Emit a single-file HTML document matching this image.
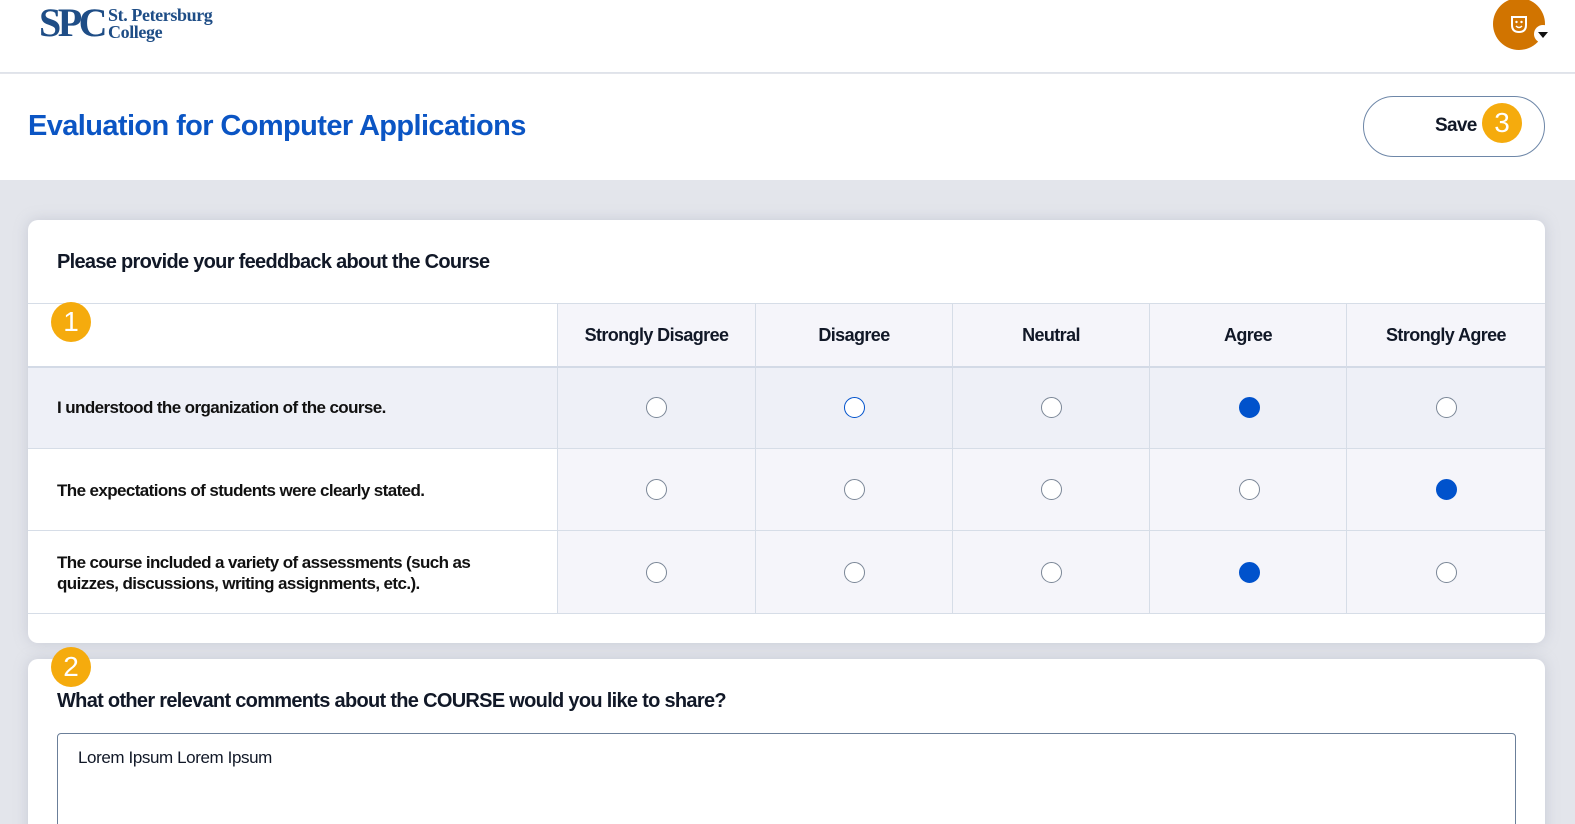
<!DOCTYPE html>
<html><head><meta charset="utf-8"><style>
*{margin:0;padding:0;box-sizing:border-box}
html,body{width:1575px;height:824px;overflow:hidden}
body{background:#e3e5eb;font-family:"Liberation Sans",sans-serif;color:#111827;position:relative}
.a{position:absolute}
.hdr{left:0;top:0;width:1575px;height:73px;background:#fff;border-bottom:1px solid #dfe3ea}
.band{left:0;top:74px;width:1575px;height:106px;background:#fff}
.card{background:#fff;border-radius:10px;box-shadow:0 0 14px rgba(150,155,175,.35)}
.badge{width:40px;height:40px;border-radius:50%;background:#f5ab0d;color:#fff;font-size:28px;text-align:center;line-height:40px}
.cell{position:absolute;border-right:1px solid #d6dde7;border-bottom:1px solid #d6dde7}
.hd{font-weight:bold;font-size:18px;letter-spacing:-0.6px;text-align:center;line-height:63px}
.lbl{font-weight:bold;font-size:17px;letter-spacing:-0.6px;color:#111}
.r{position:absolute;width:21px;height:21px;border-radius:50%;border:1.5px solid #7b8797;background:#fff}
.f{background:#0052cc;border-color:#0052cc}
</style></head><body>
<div class="a hdr"></div>
<div class="a" style="left:39px;top:2px;font-family:'Liberation Serif',serif;color:#1e4d86;font-weight:bold;font-size:40px;letter-spacing:-3.5px;line-height:42px">SPC</div>
<div class="a" style="left:108px;top:7px;font-family:'Liberation Serif',serif;color:#1e4d86;font-weight:bold;font-size:18px;line-height:17px;letter-spacing:-0.4px">St. Petersburg<br>College</div>
<div class="a" style="left:1493px;top:-2px;width:52px;height:52px;border-radius:50%;background:#d17400"></div>
<svg class="a" style="left:1509px;top:14px" width="20" height="20" viewBox="0 0 20 20"><path d="M3 3 L17 3 L17 11 Q17 18 10 18 Q3 18 3 11 Z" fill="none" stroke="#fff" stroke-width="2"/><circle cx="7.5" cy="8" r="1.2" fill="#fff"/><circle cx="12.5" cy="8" r="1.2" fill="#fff"/><path d="M7 12 Q10 15 13 12" stroke="#fff" stroke-width="1.5" fill="none"/></svg>
<div class="a" style="left:1534px;top:25px;width:18px;height:18px;border-radius:50%;background:#fff"></div>
<div class="a" style="left:1538px;top:32px;width:0;height:0;border-left:5px solid transparent;border-right:5px solid transparent;border-top:6px solid #111"></div>
<div class="a band"></div>
<div class="a" style="left:28px;top:110px;font-size:29px;font-weight:bold;color:#0b55c4;letter-spacing:-0.6px">Evaluation for Computer Applications</div>
<div class="a" style="left:1363px;top:96px;width:182px;height:61px;border:1px solid #6e87a8;border-radius:31px;background:#fff"></div>
<div class="a" style="left:1435px;top:115px;font-size:19px;font-weight:bold;letter-spacing:-0.7px">Save</div>
<div class="a badge" style="left:1482px;top:103px">3</div>

<div class="a card" style="left:28px;top:220px;width:1517px;height:423px"></div>
<div class="a" style="left:57px;top:251px;font-size:20px;font-weight:bold;letter-spacing:-0.7px">Please provide your feeddback about the Course</div>
<div class="a" style="left:28px;top:303px;width:1517px;height:1px;background:#d6dde7"></div>
<div class="cell" style="left:28px;top:304px;width:530px;height:64px;background:#fff;border-bottom:2px solid #d3dae6"></div>
<div class="a badge" style="left:51px;top:302px">1</div>
<div class="cell hd" style="left:557px;top:304px;width:199px;height:64px;background:#f5f5fa;border-left:1px solid #d6dde7;border-bottom:2px solid #d3dae6">Strongly Disagree</div>
<div class="cell hd" style="left:756px;top:304px;width:197px;height:64px;background:#f5f5fa;border-bottom:2px solid #d3dae6">Disagree</div>
<div class="cell hd" style="left:953px;top:304px;width:197px;height:64px;background:#f5f5fa;border-bottom:2px solid #d3dae6">Neutral</div>
<div class="cell hd" style="left:1150px;top:304px;width:197px;height:64px;background:#f5f5fa;border-bottom:2px solid #d3dae6">Agree</div>
<div class="cell hd" style="left:1347px;top:304px;width:198px;height:64px;background:#f5f5fa;border-right:none;border-bottom:2px solid #d3dae6">Strongly Agree</div>
<div class="cell" style="left:28px;top:368px;width:530px;height:81px;background:#eef0f7"></div>
<div class="cell" style="left:557px;top:368px;width:988px;height:81px;background:#eef0f7;border-left:1px solid #d6dde7;border-right:none"></div>
<div class="cell" style="left:28px;top:449px;width:530px;height:82px;background:#fff"></div>
<div class="cell" style="left:557px;top:449px;width:988px;height:82px;background:#f5f5fa;border-left:1px solid #d6dde7;border-right:none"></div>
<div class="cell" style="left:28px;top:531px;width:530px;height:83px;background:#fff"></div>
<div class="cell" style="left:557px;top:531px;width:988px;height:83px;background:#f5f5fa;border-left:1px solid #d6dde7;border-right:none"></div>
<div class="a" style="left:755px;top:368px;width:1px;height:245px;background:#d6dde7"></div>
<div class="a" style="left:952px;top:368px;width:1px;height:245px;background:#d6dde7"></div>
<div class="a" style="left:1149px;top:368px;width:1px;height:245px;background:#d6dde7"></div>
<div class="a" style="left:1346px;top:368px;width:1px;height:245px;background:#d6dde7"></div>
<div class="a lbl" style="left:57px;top:398px">I understood the organization of the course.</div>
<div class="a lbl" style="left:57px;top:481px">The expectations of students were clearly stated.</div>
<div class="a lbl" style="left:57px;top:552px;line-height:21px">The course included a variety of assessments (such as<br>quizzes, discussions, writing assignments, etc.).</div>

<div class="r" style="left:646px;top:397px"></div>
<div class="r" style="left:844px;top:397px;border-color:#0052cc"></div>
<div class="r" style="left:1041px;top:397px"></div>
<div class="r f" style="left:1239px;top:397px"></div>
<div class="r" style="left:1436px;top:397px"></div>
<div class="r" style="left:646px;top:479px"></div>
<div class="r" style="left:844px;top:479px"></div>
<div class="r" style="left:1041px;top:479px"></div>
<div class="r" style="left:1239px;top:479px"></div>
<div class="r f" style="left:1436px;top:479px"></div>
<div class="r" style="left:646px;top:562px"></div>
<div class="r" style="left:844px;top:562px"></div>
<div class="r" style="left:1041px;top:562px"></div>
<div class="r f" style="left:1239px;top:562px"></div>
<div class="r" style="left:1436px;top:562px"></div>

<div class="a card" style="left:28px;top:659px;width:1517px;height:200px"></div>
<div class="a badge" style="left:51px;top:647px">2</div>
<div class="a" style="left:57px;top:690px;font-size:20px;font-weight:bold;letter-spacing:-0.7px">What other relevant comments about the COURSE would you like to share?</div>
<div class="a" style="left:57px;top:733px;width:1459px;height:120px;border:1px solid #6b7f99;border-radius:4px;background:#fff"></div>
<div class="a" style="left:78px;top:748px;font-size:17px;letter-spacing:-0.4px">Lorem Ipsum Lorem Ipsum</div>
</body></html>
